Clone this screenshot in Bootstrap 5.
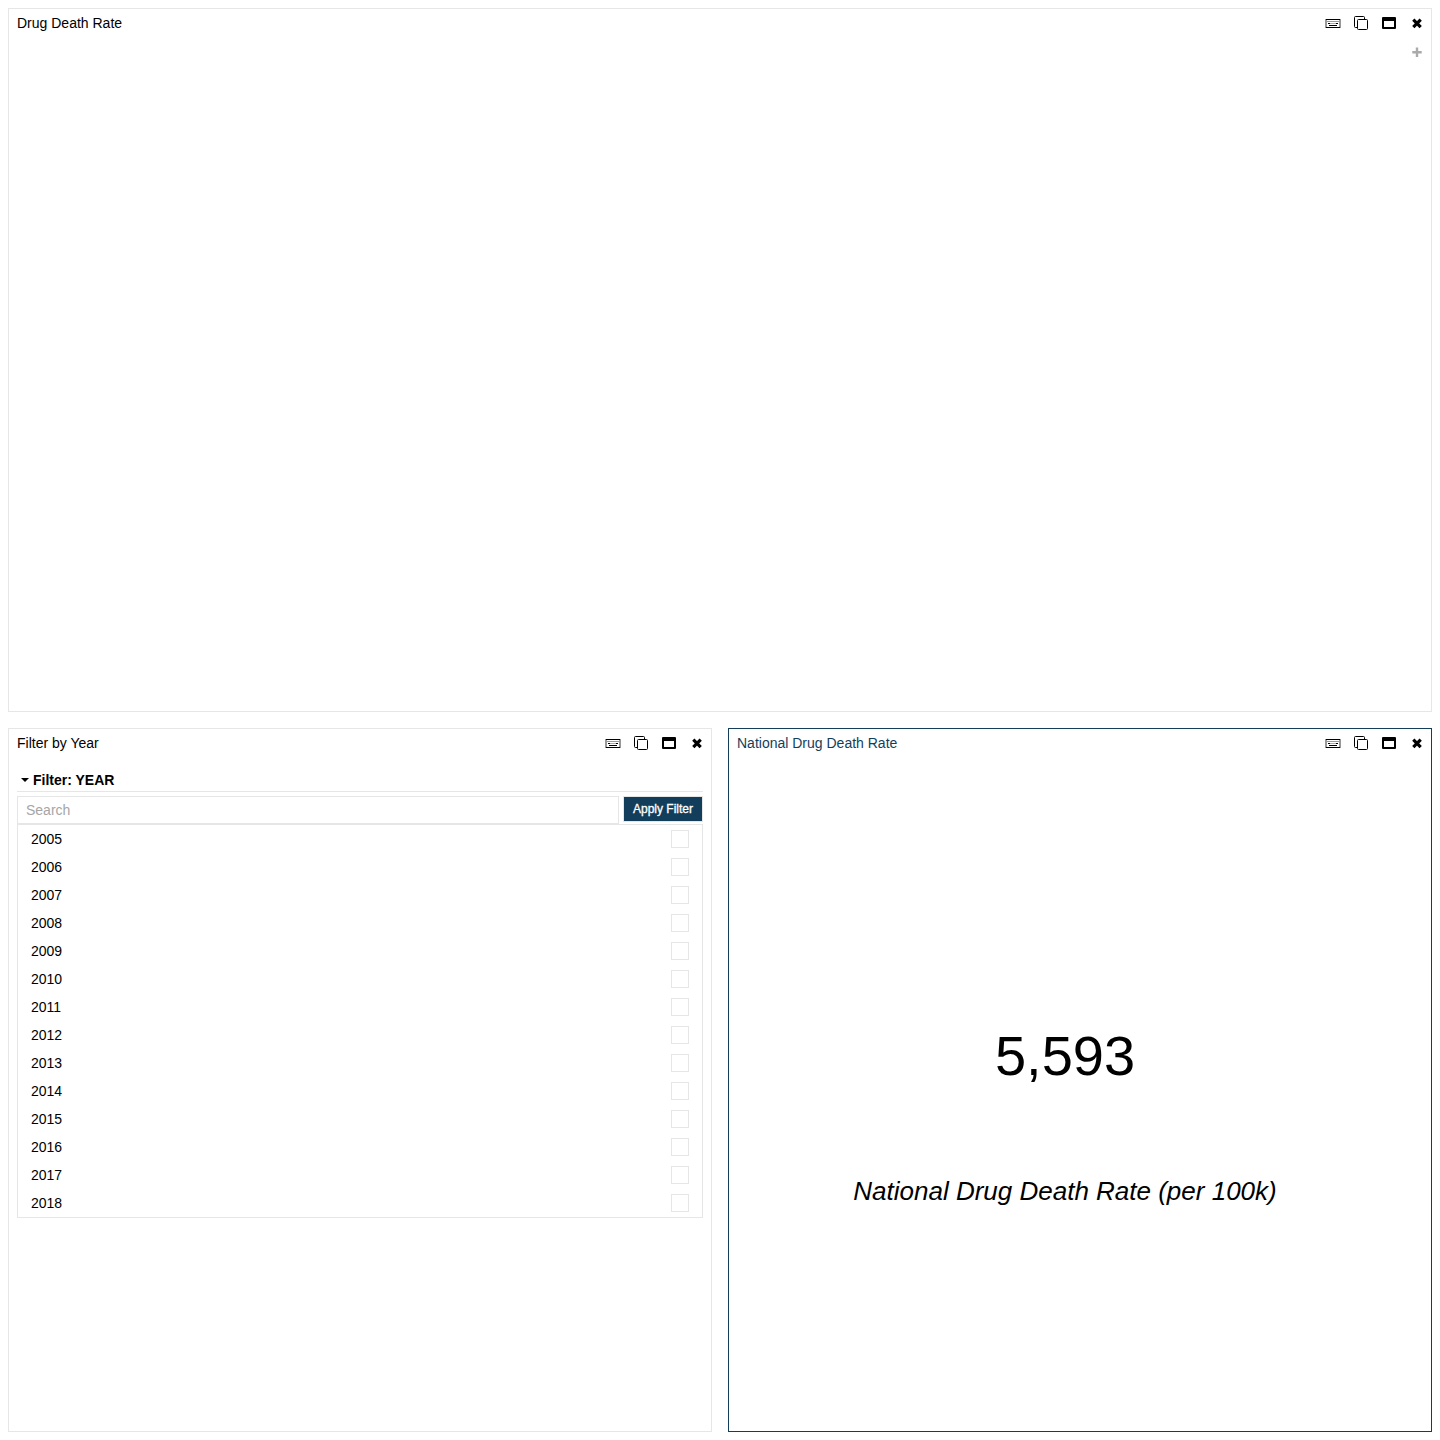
<!DOCTYPE html>
<html lang="en">
<head>
<meta charset="utf-8">
<meta name="viewport" content="width=device-width, initial-scale=1">
<title>Drug Death Rate</title>
<link href="https://cdn.jsdelivr.net/npm/bootstrap@5.3.0/dist/css/bootstrap.min.css" rel="stylesheet">
<style>
  :root { --line: #e6e6e6; --accent: #133e5b; }
  body { font: 14px/20px "Liberation Sans", Arial, sans-serif; color: #000; background: #fff; }
  .dashboard { gap: 16px; grid-template: repeat(2, minmax(0, 1fr)) / repeat(2, minmax(0, 1fr)); }
  .pane { border: 1px solid var(--line); }
  .pane-wide { grid-column: 1 / -1; }
  .pane-active { border-color: var(--accent); }
  .pane-active .pane-title { color: var(--accent); }
  .pane-title { font-size: 14px; line-height: 28px; font-weight: 400; }
  .tool { width: 28px; height: 28px; padding: 0; border: 0; background: none; color: #000; display: block; }
  .tool svg { display: block; width: 28px; height: 28px; }
  .tool-add { color: #aaa; }
  .section-toggle { height: 24px; padding: 0 4px; border: 0; border-bottom: 1px solid var(--line); background: none; font-weight: 700; gap: 4px; margin-top: 11px; color: #000; }
  .search-row { gap: 4px; margin-top: 4px; }
  .search-box { height: 28px; padding: 0 8px; border: 1px solid var(--line); border-radius: 0; font-size: 14px; }
  .search-box::placeholder { color: #a6a6a6; }
  .apply-btn { height: 26px; width: 80px; padding: 0; border: 1px solid var(--line); background: var(--accent); color: #fff; font-size: 12px; line-height: 24px; -webkit-text-stroke: .3px #fff; }
  .year-list { border: 1px solid var(--line); }
  .year-item { height: 28px; padding: 0 13px; cursor: pointer; }
  .year-box { appearance: none; width: 18px; height: 18px; border: 1px solid var(--line); margin: 0; background: #fff; }
  .year-box:checked { background: var(--accent); }
  .kpi { padding: 34px 30px 0 0; gap: 80px; }
  .kpi-value { font-size: 56px; line-height: 80px; }
  .kpi-label { font-size: 26px; line-height: 30px; font-style: italic; }
</style>
<script src="https://cdn.jsdelivr.net/npm/bootstrap@5.3.0/dist/js/bootstrap.bundle.min.js"></script>
</head>
<body>
<svg class="d-none" xmlns="http://www.w3.org/2000/svg">
  <symbol id="i-keys" viewBox="0 0 28 28">
    <g shape-rendering="crispEdges">
      <path fill="#999" d="M6 10h2v9H6zM20 10h2v9h-2z"/>
      <path fill="#000" d="M7 10h14v1H7zM7 18h14v1H7zM10 16h8v1h-8z"/>
      <path fill="#999" d="M8 12h12v1H8z"/>
      <path fill="#000" d="M9 14h2v1H9zM17 14h2v1h-2z"/>
      <path fill="#aaa" d="M11 14h6v1h-6z"/>
    </g>
  </symbol>
  <symbol id="i-copy" viewBox="0 0 28 28">
    <path fill="none" stroke="currentColor" d="M10.500 18.500H8.500a1 1 0 0 1-1-1V8.500a1 1 0 0 1 1-1h8a1 1 0 0 1 1 1v2"/>
    <rect x="10.500" y="10.500" width="10" height="10" rx="1" fill="none" stroke="currentColor"/>
  </symbol>
  <symbol id="i-window" viewBox="0 0 28 28">
    <path fill="currentColor" fill-rule="evenodd" d="M8 8h12a1 1 0 0 1 1 1v10a1 1 0 0 1-1 1H8a1 1 0 0 1-1-1V9a1 1 0 0 1 1-1zM9 12v6h10v-6z"/>
  </symbol>
  <symbol id="i-close" viewBox="0 0 28 28">
    <path stroke="currentColor" stroke-width="3.200" stroke-linejoin="round" d="M10.300 10.700L17.700 18.100M17.700 10.700L10.300 18.100"/>
  </symbol>
</svg>

<main class="dashboard d-grid vh-100 p-2">
  <section class="pane pane-wide d-flex flex-column">
    <header class="d-flex justify-content-between ps-2">
      <h2 class="pane-title m-0">Drug Death Rate</h2>
      <div class="d-flex">
        <button class="tool" aria-label="Keyboard"><svg><use href="#i-keys"/></svg></button>
        <button class="tool" aria-label="Duplicate"><svg><use href="#i-copy"/></svg></button>
        <button class="tool" aria-label="Maximize"><svg><use href="#i-window"/></svg></button>
        <button class="tool" aria-label="Close"><svg><use href="#i-close"/></svg></button>
      </div>
    </header>
    <div class="d-flex justify-content-end">
      <button class="tool tool-add" aria-label="Add"><svg viewBox="0 0 28 28"><path stroke="currentColor" stroke-width="2.400" d="M14 10.500v9.500M9.300 15.200h9.400"/></svg></button>
    </div>
  </section>

  <section class="pane d-flex flex-column">
    <header class="d-flex justify-content-between ps-2">
      <h2 class="pane-title m-0">Filter by Year</h2>
      <div class="d-flex">
        <button class="tool" aria-label="Keyboard"><svg><use href="#i-keys"/></svg></button>
        <button class="tool" aria-label="Duplicate"><svg><use href="#i-copy"/></svg></button>
        <button class="tool" aria-label="Maximize"><svg><use href="#i-window"/></svg></button>
        <button class="tool" aria-label="Close"><svg><use href="#i-close"/></svg></button>
      </div>
    </header>
    <form class="px-2">
      <button type="button" class="section-toggle d-flex align-items-center w-100" data-bs-toggle="collapse" data-bs-target="#years" aria-expanded="true">
        <svg width="8" height="4" viewBox="0 0 8 4"><path d="M0 0h8L4 4z"/></svg>Filter: YEAR
      </button>
      <div id="years" class="collapse show">
        <div class="search-row d-flex align-items-start">
          <input type="text" class="search-box flex-fill" placeholder="Search" aria-label="Search">
          <button type="button" class="apply-btn">Apply Filter</button>
        </div>
        <div class="year-list">
          <label class="year-item d-flex align-items-center justify-content-between">2005<input type="checkbox" class="year-box"></label>
          <label class="year-item d-flex align-items-center justify-content-between">2006<input type="checkbox" class="year-box"></label>
          <label class="year-item d-flex align-items-center justify-content-between">2007<input type="checkbox" class="year-box"></label>
          <label class="year-item d-flex align-items-center justify-content-between">2008<input type="checkbox" class="year-box"></label>
          <label class="year-item d-flex align-items-center justify-content-between">2009<input type="checkbox" class="year-box"></label>
          <label class="year-item d-flex align-items-center justify-content-between">2010<input type="checkbox" class="year-box"></label>
          <label class="year-item d-flex align-items-center justify-content-between">2011<input type="checkbox" class="year-box"></label>
          <label class="year-item d-flex align-items-center justify-content-between">2012<input type="checkbox" class="year-box"></label>
          <label class="year-item d-flex align-items-center justify-content-between">2013<input type="checkbox" class="year-box"></label>
          <label class="year-item d-flex align-items-center justify-content-between">2014<input type="checkbox" class="year-box"></label>
          <label class="year-item d-flex align-items-center justify-content-between">2015<input type="checkbox" class="year-box"></label>
          <label class="year-item d-flex align-items-center justify-content-between">2016<input type="checkbox" class="year-box"></label>
          <label class="year-item d-flex align-items-center justify-content-between">2017<input type="checkbox" class="year-box"></label>
          <label class="year-item d-flex align-items-center justify-content-between">2018<input type="checkbox" class="year-box"></label>
        </div>
      </div>
    </form>
  </section>

  <section class="pane pane-active d-flex flex-column">
    <header class="d-flex justify-content-between ps-2">
      <h2 class="pane-title m-0">National Drug Death Rate</h2>
      <div class="d-flex">
        <button class="tool" aria-label="Keyboard"><svg><use href="#i-keys"/></svg></button>
        <button class="tool" aria-label="Duplicate"><svg><use href="#i-copy"/></svg></button>
        <button class="tool" aria-label="Maximize"><svg><use href="#i-window"/></svg></button>
        <button class="tool" aria-label="Close"><svg><use href="#i-close"/></svg></button>
      </div>
    </header>
    <div class="kpi flex-fill d-flex flex-column align-items-center justify-content-center">
      <div class="kpi-value">5,593</div>
      <div class="kpi-label">National Drug Death Rate (per 100k)</div>
    </div>
  </section>
</main>
</body>
</html>
